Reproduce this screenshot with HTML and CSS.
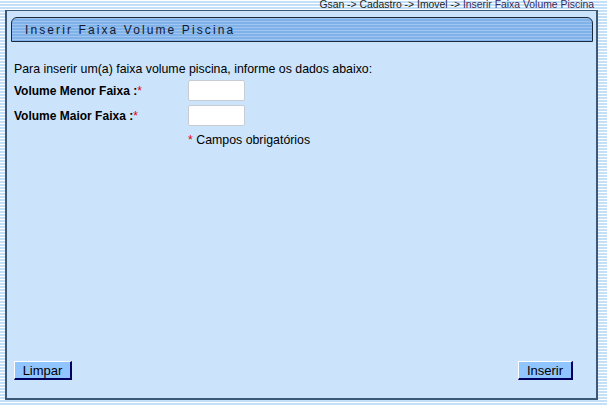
FILE: index.html
```html
<!DOCTYPE html>
<html lang="pt">
<head>
    <meta charset="UTF-8">
    <title>Inserir Faixa Volume Piscina</title>
    <link rel="stylesheet" href="styles.css">
</head>
<body>

<div class="breadcrumb">
    Gsan -&gt; Cadastro -&gt; Imovel -&gt; <span class="atual">Inserir Faixa Volume Piscina</span>
</div>

<div class="painel">
    <div class="titulo">Inserir Faixa Volume Piscina</div>

    <form class="formulario">
        <p class="instrucao">Para inserir um(a) faixa volume piscina, informe os dados abaixo:</p>

        <div class="linha">
            <label for="menor">Volume Menor Faixa :<span class="obrig">*</span></label>
            <input type="text" id="menor" name="menor">
        </div>
        <div class="linha">
            <label for="maior">Volume Maior Faixa :<span class="obrig">*</span></label>
            <input type="text" id="maior" name="maior">
        </div>
        <div class="legenda"><span class="obrig">*</span> Campos obrigatórios</div>

        <div class="botoes">
            <button type="reset">Limpar</button>
            <button type="submit">Inserir</button>
        </div>
    </form>
</div>

</body>
</html>
```

FILE: styles.css
```css
body {
    margin: 0;
    padding: 0;
    font-family: "Liberation Sans", Arial, sans-serif;
    background: repeating-linear-gradient(to bottom, #ffffff 0, #ffffff 1px, #c4e0f8 1px, #c4e0f8 3px);
    width: 607px;
    height: 406px;
    overflow: hidden;
}
.breadcrumb {
    height: 10px;
    line-height: 10px;
    font-size: 10.4px;
    color: #222;
    text-align: right;
    padding-right: 13px;
    white-space: nowrap;
}
.breadcrumb .atual {
    color: #3a2a5a;
}
.painel {
    box-sizing: border-box;
    width: 593px;
    height: 390px;
    margin-left: 5px;
    background-color: #cbe4fc;
    border: 2px solid #3b5876;
    border-top-width: 1px;
    padding: 6px 3px 18px 4px;
    display: flex;
    flex-direction: column;
}
.titulo {
    box-sizing: border-box;
    height: 25px;
    line-height: 24px;
    border: 1px solid #1c2a40;
    border-radius: 6px 6px 0 0;
    background: repeating-linear-gradient(to bottom, #9ec6f1 0, #9ec6f1 1px, #80b1e9 1px, #80b1e9 3px);
    font-size: 12px;
    letter-spacing: 2.1px;
    color: #111a33;
    padding-left: 13px;
}
.formulario {
    flex: 1;
    display: flex;
    flex-direction: column;
    padding-left: 3px;
    font-size: 12.35px;
    color: #000;
}
.instrucao {
    margin: 20px 0 4px;
}
.linha {
    display: flex;
    align-items: center;
    height: 21px;
    margin-bottom: 4px;
}
.linha label {
    width: 174px;
    font-size: 12px;
    font-weight: bold;
    color: #000;
}
.obrig {
    color: #e00000;
    font-weight: normal;
}
.linha input {
    box-sizing: border-box;
    width: 57px;
    height: 21px;
    border: 1px solid #c8ccd2;
    border-radius: 2px;
    background: #fff;
    padding: 2px;
    font-size: 12px;
}
.legenda {
    margin-left: 174px;
    margin-top: 3px;
}
.botoes {
    margin-top: auto;
    display: flex;
    justify-content: space-between;
    padding-right: 20px;
}
button {
    box-sizing: border-box;
    height: 19px;
    width: 58px;
    padding: 0;
    font-family: "Liberation Sans", Arial, sans-serif;
    font-size: 13px;
    color: #000;
    background-color: #91c5ff;
    border: 1px solid #fff;
    border-right: 2px solid #000060;
    border-bottom: 2px solid #000060;
    cursor: pointer;
}
button[type="submit"] {
    width: 55px;
}
```
